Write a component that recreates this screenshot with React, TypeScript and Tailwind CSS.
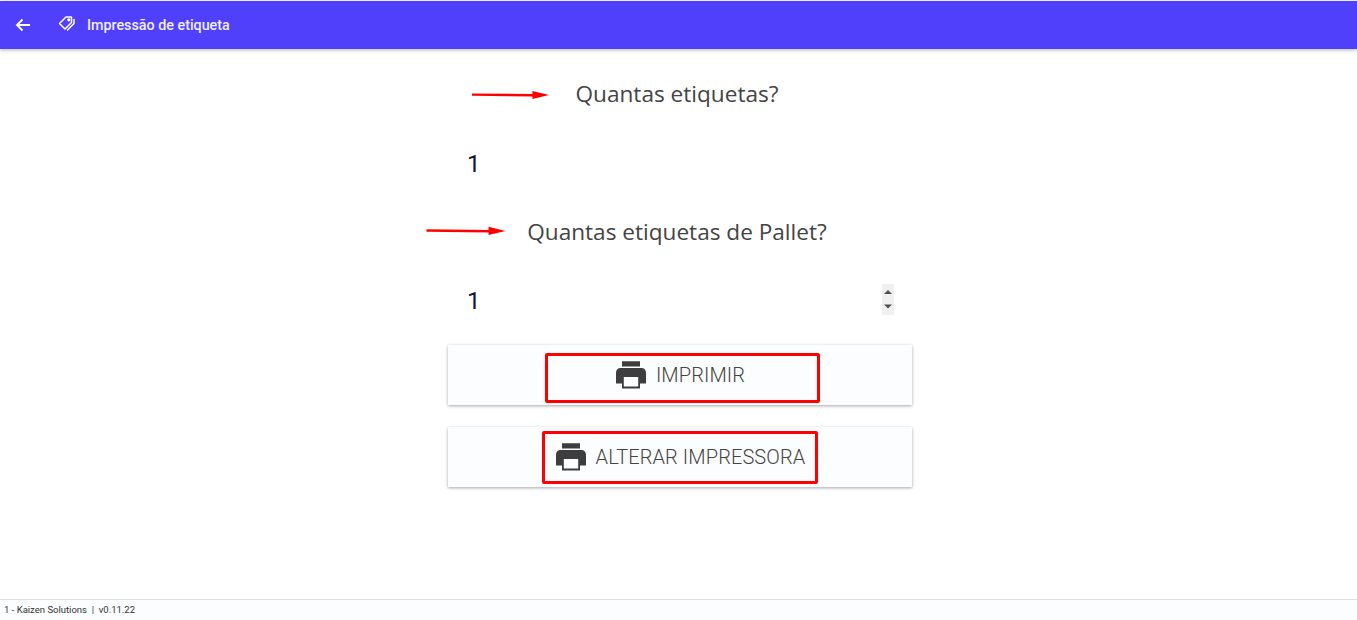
import React from "react";

function Printer() {
  return (
    <svg viewBox="0 0 24 24" className="w-9 h-9 shrink-0" fill="#3d3d3f">
      <path fillRule="evenodd" d="M18 2.8H6v3.6h12V2.8zM19 7.3H5c-1.66 0-3 1.34-3 3V17.6h4V21h12v-3.4h4v-7.3c0-1.66-1.34-3-3-3zM16.8 19.7H7.2V13.4h9.6v6.3z" />
    </svg>
  );
}

function RedArrow({ className }: { className: string }) {
  return (
    <svg viewBox="0 0 80 12" className={className} fill="none">
      <path d="M0 5.6 L64 6.2" stroke="#ff0000" strokeWidth="2.5" />
      <path d="M62 1.8 L79 6 L62 10 Z" fill="#ff0000" />
    </svg>
  );
}

function PrintButton({ label, box }: { label: string; box: string }) {
  return (
    <button className="relative flex h-[60px] w-full items-center justify-center gap-[7px] bg-[#fcfdff] pr-[2px] font-['Roboto',sans-serif] text-xl font-light tracking-[0.1px] text-[#444] shadow-[0_1px_3px_rgba(0,0,0,0.35)]">
      <Printer />
      <span>{label}</span>
      <span className={box} />
    </button>
  );
}

export default function App() {
  return (
    <div className="flex h-[620px] flex-col bg-white pt-px font-['Roboto',sans-serif]">
      <header className="relative z-10 flex h-12 shrink-0 items-center bg-[#5040fc] text-white shadow-[0_1px_4px_rgba(0,0,0,0.3)]">
        <svg viewBox="0 0 16 16" className="ml-[15px] h-4 w-4" fill="none" stroke="white" strokeWidth="1.9">
          <path d="M15 8H2M7.5 2.5 2 8l5.5 5.5" />
        </svg>
        <svg viewBox="0 0 18 18" className="ml-[27px] mb-[3px] h-[18px] w-[18px]" fill="none" stroke="white" strokeWidth="1.5" strokeLinejoin="round" strokeLinecap="round">
          <path d="M1.5 8.5 8 2h5.5v5.5L7 14z" />
          <path d="M16 4.5v4l-6.5 6.5" />
          <circle cx="10.8" cy="4.8" r="0.9" />
        </svg>
        <span className="ml-[11px] mt-[2px] text-[14.3px] font-medium text-[#f1efff]">Impressão de etiqueta</span>
      </header>

      <main className="ml-[448px] flex w-[464px] flex-1 flex-col">
        <h2 className="relative mt-[27px] pr-[6px] text-center font-['Open_Sans',sans-serif] text-[22.6px] leading-[36px] text-[#444]">
          Quantas etiquetas?
          <RedArrow className="absolute left-[24px] top-[13px] h-3 w-[78px]" />
        </h2>
        <div className="mt-[36px] flex h-8 items-center pl-[19px] font-['Roboto',sans-serif] text-2xl text-[#10103a]">1</div>
        <h2 className="relative mt-[34px] pr-[6px] text-center font-['Open_Sans',sans-serif] text-[22.6px] leading-[36px] text-[#444]">
          Quantas etiquetas de Pallet?
          <RedArrow className="absolute left-[-22px] top-[11px] h-3 w-[81px]" />
        </h2>
        <div className="mt-[35px] flex h-8 items-center justify-between pl-[19px] pr-[18px] font-['Roboto',sans-serif] text-2xl text-[#10103a]">
          <span>1</span>
          <svg viewBox="0 0 12 31" className="mb-1 h-[31px] w-3 bg-[#f0f0f0]">
            <path d="M2 10 L6 6 L10 10 Z" fill="#505050" />
            <path d="M2 20.5 L10 20.5 L6 24.5 Z" fill="#505050" />
          </svg>
        </div>
        <div className="mt-[28px] flex flex-col gap-[22px]">
          <PrintButton label="IMPRIMIR" box="absolute left-[97px] top-[8px] h-[50px] w-[275px] rounded-[2px] border-[3px] border-[#ff0000]" />
          <PrintButton label="ALTERAR IMPRESSORA" box="absolute left-[94px] top-[4px] h-[53px] w-[276px] rounded-[2px] border-[3px] border-[#ff0000]" />
        </div>
      </main>

      <footer className="flex h-[21px] shrink-0 items-center border-t border-[#e2e2e2] bg-[#fcfdff] pl-1 font-['Roboto',sans-serif] text-[9.5px] text-[#333]">
        1 - Kaizen Solutions &nbsp;|&nbsp; v0.11.22
      </footer>
    </div>
  );
}
